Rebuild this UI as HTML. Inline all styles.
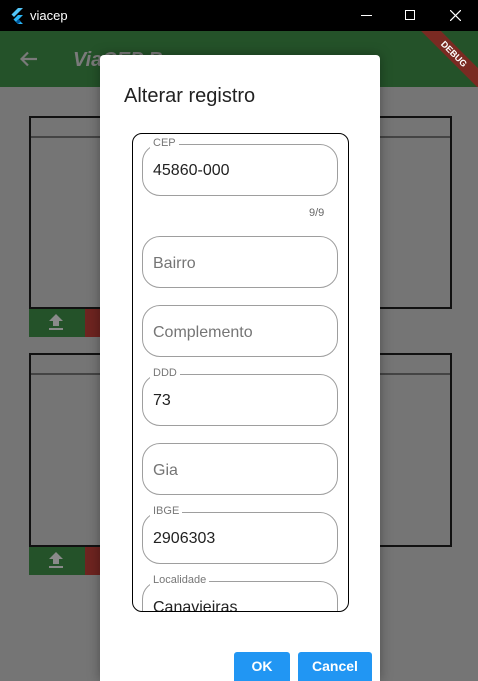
<!DOCTYPE html>
<html><head><meta charset="utf-8"><style>
*{margin:0;padding:0;box-sizing:border-box}
html,body{background:#757575;width:478px;height:681px;overflow:hidden}
body{font-family:"Liberation Sans",sans-serif;position:relative}
.abs{position:absolute}
.tb{left:0;top:0;width:478px;height:31px;background:#000;color:#fff;font-size:13px}
.app{left:0;top:31px;width:478px;height:56px;background:#245229;overflow:hidden}
.card{border:2px solid #111;background:#757575}
.fld{position:absolute;left:142px;width:196px;height:52px;border:1px solid #9e9e9e;border-radius:18px}
.fld span{position:absolute;left:10px;top:17px;font-size:16px;color:#222}
.fld span.ph{color:#757575;top:18px}
.fld i{position:absolute;left:7px;top:-8px;background:#fff;padding:0 3px;font-style:normal;font-size:11px;color:#777}
.btn{position:absolute;top:652px;height:29px;background:#2196f3;color:#fff;font-weight:bold;font-size:14px;text-align:center;line-height:29px;border-radius:3px 3px 0 0}
</style></head><body>
<div class="abs tb">
<svg class="abs" style="left:10px;top:8px" width="14" height="16" viewBox="0 0 14 16"><path d="M8 0h5L4 9 1.5 6.5z" fill="#54c5f8"/><path d="M8 7h5L8.5 11.5 13 16H8L3.5 11.5z" fill="#29b6f6"/><path d="M6 13.5l2.5-2.5L11 13.5 8 16z" fill="#01579b"/></svg>
<span class="abs" style="left:30px;top:8px">viacep</span>
<div class="abs" style="left:361px;top:15px;width:11px;height:1px;background:#fff"></div>
<div class="abs" style="left:405px;top:10px;width:10px;height:10px;border:1px solid #fff"></div>
<svg class="abs" style="left:450px;top:10px" width="11" height="11"><path d="M0 0L11 11M11 0L0 11" stroke="#fff" stroke-width="1.2"/></svg>
</div>
<div class="abs app">
<svg class="abs" style="left:20px;top:20px" width="18" height="16"><path d="M17 8H2M8 1.5L1.5 8 8 14.5" stroke="#7a7a7a" stroke-width="2.2" fill="none"/></svg>
<span class="abs" style="left:73px;top:18px;font-size:20px;font-weight:bold;font-style:italic;color:#7a7a7a">ViaCEP Busca</span>
<div class="abs" style="left:409px;top:16px;width:90px;height:14px;background:#7a2a22;transform:rotate(45deg);color:#fff;font-size:9px;font-weight:bold;text-align:center;line-height:14px">DEBUG</div>
</div>
<div class="abs card" style="left:29px;top:116px;width:423px;height:193px"><div style="margin-top:18px;border-top:2px solid #444"></div></div>
<div class="abs" style="left:29px;top:309px;width:56px;height:28px;background:#245229"></div>
<div class="abs" style="left:85px;top:309px;width:40px;height:28px;background:#6e2420"></div>
<svg class="abs" style="left:49px;top:314px" width="14" height="16"><path d="M7 0L0 7h4v5h6V7h4z" fill="#8a8a8a"/><rect x="0" y="14" width="14" height="2" fill="#8a8a8a"/></svg>
<div class="abs card" style="left:29px;top:353px;width:423px;height:194px"><div style="margin-top:18px;border-top:2px solid #444"></div></div>
<div class="abs" style="left:29px;top:547px;width:56px;height:28px;background:#245229"></div>
<div class="abs" style="left:85px;top:547px;width:40px;height:28px;background:#6e2420"></div>
<svg class="abs" style="left:49px;top:552px" width="14" height="16"><path d="M7 0L0 7h4v5h6V7h4z" fill="#8a8a8a"/><rect x="0" y="14" width="14" height="2" fill="#8a8a8a"/></svg>
<div class="abs" style="left:100px;top:55px;width:280px;height:626px;background:#fff;border-radius:4px 4px 0 0;box-shadow:0 0 12px rgba(0,0,0,.35)"></div>
<div class="abs" style="left:124px;top:85px;font-size:20px;color:#222">Alterar registro</div>
<div class="abs" style="left:132px;top:133px;width:217px;height:479px;border:1px solid #000;border-radius:10px;overflow:hidden">
</div>
<div class="abs" style="left:133px;top:134px;width:215px;height:477px;overflow:hidden;border-radius:9px">
<div style="position:relative;left:-133px;top:-134px;width:478px;height:681px">
<div class="fld" style="top:144px"><i>CEP</i><span>45860-000</span></div>
<div class="abs" style="left:309px;top:207px;font-size:11px;color:#666">9/9</div>
<div class="fld" style="top:236px"><span class="ph">Bairro</span></div>
<div class="fld" style="top:305px"><span class="ph">Complemento</span></div>
<div class="fld" style="top:374px"><i>DDD</i><span>73</span></div>
<div class="fld" style="top:443px"><span class="ph">Gia</span></div>
<div class="fld" style="top:512px"><i>IBGE</i><span>2906303</span></div>
<div class="fld" style="top:581px"><i>Localidade</i><span>Canavieiras</span></div>
</div></div>
<div class="btn" style="left:234px;width:56px">OK</div>
<div class="btn" style="left:298px;width:74px">Cancel</div>
</body></html>
